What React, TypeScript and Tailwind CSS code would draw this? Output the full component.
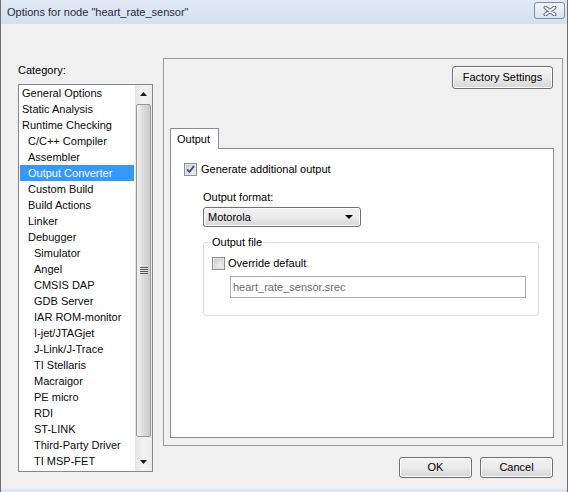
import React from "react"

const categories: [string, number][] = [
    ["General Options", 0],
    ["Static Analysis", 0],
    ["Runtime Checking", 0],
    ["C/C++ Compiler", 1],
    ["Assembler", 1],
    ["Output Converter", 1],
    ["Custom Build", 1],
    ["Build Actions", 1],
    ["Linker", 1],
    ["Debugger", 1],
    ["Simulator", 2],
    ["Angel", 2],
    ["CMSIS DAP", 2],
    ["GDB Server", 2],
    ["IAR ROM-monitor", 2],
    ["I-jet/JTAGjet", 2],
    ["J-Link/J-Trace", 2],
    ["TI Stellaris", 2],
    ["Macraigor", 2],
    ["PE micro", 2],
    ["RDI", 2],
    ["ST-LINK", 2],
    ["Third-Party Driver", 2],
    ["TI MSP-FET", 2],
]

const indent = ["pl-[2px]", "pl-[8px]", "pl-[14px]"]

function CheckBox({ checked }: { checked: boolean }) {
    return (
        <svg width="13" height="13" viewBox="0 0 13 13" className="shrink-0">
            <defs>
                <linearGradient id={checked ? "cbOn" : "cbOff"} x1="0" y1="0" x2="1" y2="1">
                    <stop offset="0" stopColor="#cfcfcf" />
                    <stop offset="1" stopColor="#f6f6f6" />
                </linearGradient>
            </defs>
            <rect x="0.5" y="0.5" width="12" height="12" fill="#f4f4f4" stroke="#8e8f8f" />
            <rect x="2" y="2" width="9" height="9" fill={`url(#${checked ? "cbOn" : "cbOff"})`} stroke="#c4c4c4" strokeWidth="0.6" />
            {checked && (
                <path d="M3.2 6.4 L5.4 9 L10 3.2" fill="none" stroke="#3c4f86" strokeWidth="1.9" strokeLinejoin="round" />
            )}
        </svg>
    )
}

function Button({ label, className }: { label: string; className: string }) {
    return (
        <button
            type="button"
            className={`border border-[#707070] rounded-[3px] bg-gradient-to-b from-[#f2f2f2] via-[#ebebeb] to-[#d6d6d6] text-black text-[11px] leading-none shadow-[inset_0_0_0_1px_#fcfcfc] ${className}`}
        >
            {label}
        </button>
    )
}

function ScrollBar() {
    return (
        <div className="w-[17px] shrink-0 flex flex-col bg-gradient-to-r from-[#e6e6e6] via-[#f3f3f3] to-[#ececec]">
            <div className="h-[18px] flex items-center justify-center">
                <svg width="7" height="4" viewBox="0 0 7 4"><path d="M3.5 0 L7 4 L0 4 Z" fill="#1c1c1c" /></svg>
            </div>
            <div className="flex-1 px-[1px] pb-[16px] pt-[1px] flex">
                <div className="flex-1 rounded-[2px] border border-[#979797] bg-gradient-to-r from-[#f1f1f1] via-[#dcdcdc] to-[#cacaca] flex items-center justify-center">
                    <div className="flex flex-col gap-[1px]">
                        <div className="w-[8px] h-[1px] bg-[#5a5a5a]" />
                        <div className="w-[8px] h-[1px] bg-[#5a5a5a]" />
                        <div className="w-[8px] h-[1px] bg-[#5a5a5a]" />
                        <div className="w-[8px] h-[1px] bg-[#5a5a5a]" />
                    </div>
                </div>
            </div>
            <div className="h-[18px] flex items-center justify-center">
                <svg width="7" height="4" viewBox="0 0 7 4"><path d="M0 0 L7 0 L3.5 4 Z" fill="#1c1c1c" /></svg>
            </div>
        </div>
    )
}

export default function App() {
    return (
        <div className="w-[568px] h-[492px] bg-[#f0f0f0] flex flex-col border-x border-[#6f6f6f] text-black text-[11px] font-['Liberation_Sans',Arial,sans-serif]">
            {/* title bar */}
            <div className="h-[24px] shrink-0 flex items-center justify-between bg-gradient-to-b from-[#e1eaf6] to-[#d4e0ef] pl-[6px] pr-[2px]">
                <span className="text-[11px] text-[#1d2a3a]">Options for node "heart_rate_sensor"</span>
                <div className="w-[31px] h-[17px] mt-[-3px] rounded-[3px] border border-[#7f8ea5] bg-gradient-to-b from-[#f2f6fb] to-[#d9e3ef] flex items-center justify-center">
                    <svg width="14" height="10" viewBox="0 0 14 10">
                        <path d="M2.5 1.5 L11.5 8.5 M11.5 1.5 L2.5 8.5" stroke="#5e6c80" strokeWidth="4" strokeLinecap="round" />
                        <path d="M2.5 1.5 L11.5 8.5 M11.5 1.5 L2.5 8.5" stroke="#ffffff" strokeWidth="2" strokeLinecap="round" />
                    </svg>
                </div>
            </div>

            {/* body */}
            <div className="flex-1 flex">
                <div className="w-[135px] ml-[17px] shrink-0">
                    <div className="mt-[39px] mb-[7px] leading-[14px]">Category:</div>
                    <div className="h-[388px] border border-[#828790] bg-white flex">
                        <div className="flex-1 flex flex-col">
                            {categories.map(([name, level], index) => {
                                const selected = name === "Output Converter"
                                return (
                                    <div
                                        key={index}
                                        className={`h-[16px] leading-[16px] mx-[1px] whitespace-nowrap ${indent[level]} ${selected ? "bg-[#3399ff] text-white" : "text-[#0a0a0a]"}`}
                                    >
                                        {name}
                                    </div>
                                )
                            })}
                        </div>
                        <ScrollBar />
                    </div>
                </div>

                <div className="ml-[10px] mt-[34px] flex flex-col">
                    <div className="w-[400px] h-[388px] border border-[#9a9a9a] flex flex-col">
                        <div className="flex justify-end pt-[7px] pr-[9px]">
                            <Button label="Factory Settings" className="w-[101px] h-[23px]" />
                        </div>
                        <div className="ml-[6px] mt-[39px] flex flex-col">
                            <div className="w-[49px] h-[21px] mb-[-1px] relative z-10 bg-white border border-b-0 border-[#898c95] pl-[6px] leading-[20px]">
                                Output
                            </div>
                            <div className="w-[384px] h-[290px] bg-white border border-[#898c95] flex flex-col pl-[13px] pt-[13px]">
                                <div className="flex items-center gap-[4px] h-[14px]">
                                    <CheckBox checked={true} />
                                    <span>Generate additional output</span>
                                </div>
                                <div className="pl-[19px] flex flex-col">
                                    <div className="mt-[14px] leading-[14px]">Output format:</div>
                                    <div className="mt-[3px] w-[158px] h-[20px] rounded-[3px] border border-[#707070] bg-gradient-to-b from-[#f2f2f2] via-[#ebebeb] to-[#d6d6d6] flex items-center justify-between pl-[4px] pr-[7px] shadow-[inset_0_0_0_1px_#fcfcfc]">
                                        <span>Motorola</span>
                                        <svg width="8" height="4" viewBox="0 0 8 4"><path d="M0 0 L8 0 L4 4 Z" fill="#000" /></svg>
                                    </div>
                                    <fieldset className="mt-[9px] w-[336px] h-[80px] border border-[#d5dfe5] rounded-[3px] pl-[8px] pr-[12px]">
                                        <legend className="px-[1px] ml-[-1px] leading-[13px]">Output file</legend>
                                        <div className="flex items-center gap-[3px] mt-[7px] h-[14px]">
                                            <CheckBox checked={false} />
                                            <span>Override default</span>
                                        </div>
                                        <div className="ml-[18px] mt-[6px] h-[22px] border border-[#acacac] bg-white flex items-center pl-[2px] text-[#6d6d6d]">
                                            heart_rate_sensor.srec
                                        </div>
                                    </fieldset>
                                </div>
                            </div>
                        </div>
                    </div>

                    <div className="flex justify-end gap-[8px] mt-[11px] pr-[10px]">
                        <Button label="OK" className="w-[73px] h-[21px]" />
                        <Button label="Cancel" className="w-[73px] h-[21px]" />
                    </div>
                </div>
            </div>
            <div className="h-[3px] bg-[#dbe6f3] shrink-0" />
        </div>
    )
}
